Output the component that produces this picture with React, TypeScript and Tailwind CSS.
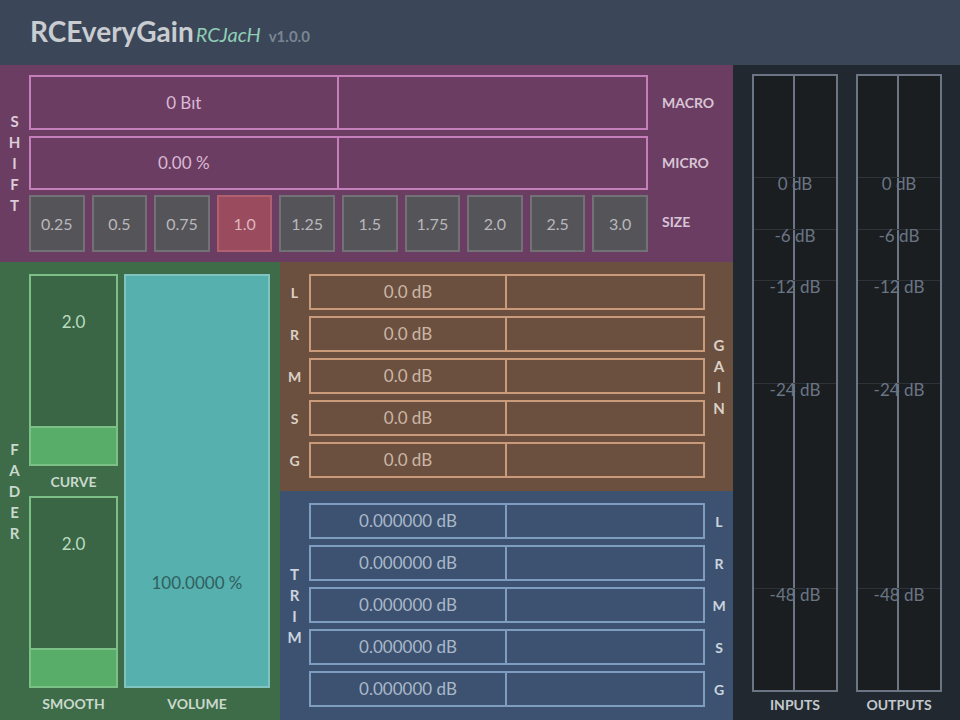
const font = "font-['Lato','Open_Sans',sans-serif]";

function Letters({ text, className }: { text: string; className: string }) {
    return (
        <div className={`flex flex-col items-center text-[15px] font-bold ${className}`}>
            {text.split("").map((c, i) => (
                <span key={i} className="h-[21px] leading-[21px]">{c}</span>
            ))}
        </div>
    );
}

function HalfBar({ value, border, text, h }: { value: string; border: string; text: string; h: string }) {
    return (
        <div className={`flex border-2 ${border} ${h}`}>
            <div className={`w-1/2 border-r-2 ${border} flex items-center justify-center text-[17px] ${text}`}>{value}</div>
            <div className="w-1/2" />
        </div>
    );
}

const sizes = ["0.25", "0.5", "0.75", "1.0", "1.25", "1.5", "1.75", "2.0", "2.5", "3.0"];
const channels = ["L", "R", "M", "S", "G"];
const marks = [
    { label: "0 dB", top: 103 },
    { label: "-6 dB", top: 155 },
    { label: "-12 dB", top: 206 },
    { label: "-24 dB", top: 309 },
    { label: "-48 dB", top: 514 },
];

function Meter({ label }: { label: string }) {
    return (
        <div className="flex flex-col items-center w-[86px]">
            <div className="relative w-full h-[618px] border-2 border-[#6b7583] bg-[#1b1e21] flex">
                <div className="w-1/2 border-r-2 border-[#6b7583]" />
                {marks.map((m) => (
                    <div key={m.label} className="absolute left-0 right-0" style={{ top: m.top - 2 }}>
                        <div className="h-px bg-[#2e3339]" />
                        <div className="text-center text-[17px] leading-[12px] text-[#6a7584] whitespace-nowrap">{m.label}</div>
                    </div>
                ))}
            </div>
            <div className="h-[24px] flex items-center text-[14px] font-bold text-[#c3c8cd]">{label}</div>
        </div>
    );
}

function FaderBox({ value, label }: { value: string; label: string }) {
    return (
        <>
            <div className="h-[192px] border-2 border-[#7cc088] bg-[#3a6645] flex flex-col">
                <div className="flex-1 flex justify-center pt-[33px] text-[17px] text-[#b9dcc0]">{value}</div>
                <div className="h-[38px] bg-[#58ae69] border-t-2 border-[#7cc088]" />
            </div>
            <div className="h-[30px] flex items-center justify-center text-[14px] font-bold text-[#c9d9cc]">{label}</div>
        </>
    );
}

export default function App() {
    return (
        <div className={`w-[960px] h-[720px] overflow-hidden bg-[#3b4758] ${font}`}>
            <div className="h-[65px] flex items-end pb-[20px] pl-[30px] gap-[2px]">
                <span className="text-[28px] font-bold text-[#c9cdd2] leading-none">RCEveryGain</span>
                <span className="text-[20px] italic text-[#8fcdb5] leading-none mb-[1px]">RCJacH</span>
                <span className="text-[15px] font-bold text-[#7a8593] leading-none ml-[6px] mb-[1px]">v1.0.0</span>
            </div>
            <div className="flex h-[655px]">
                <div className="w-[733px] flex flex-col">
                    {/* shift */}
                    <div className="h-[197px] bg-[#6b3d62] flex pt-[10px]">
                        <div className="w-[29px] flex items-center justify-center pb-[10px]">
                            <Letters text="SHIFT" className="text-[#dccbd9]" />
                        </div>
                        <div className="w-[619px] flex flex-col">
                            <HalfBar value="0 Bıt" border="border-[#c47fbb]" text="text-[#dbb8d5]" h="h-[55px]" />
                            <div className="h-[6px]" />
                            <HalfBar value="0.00 %" border="border-[#c47fbb]" text="text-[#dbb8d5]" h="h-[54px]" />
                            <div className="h-[5px]" />
                            <div className="flex gap-[7px] h-[57px]">
                                {sizes.map((s) => (
                                    <div
                                        key={s}
                                        className={`flex-1 border-2 flex items-center justify-center text-[16px] ${
                                            s === "1.0"
                                                ? "bg-[#9a4b5d] border-[#b0606f] text-[#dcb8bf]"
                                                : "bg-[#555459] border-[#727175] text-[#b9b8bb]"
                                        }`}
                                    >
                                        {s}
                                    </div>
                                ))}
                            </div>
                        </div>
                        <div className="flex-1 flex flex-col pl-[14px] text-[14px] font-bold text-[#d8c4d5]">
                            <div className="h-[54px] flex items-center">MACRO</div>
                            <div className="h-[6px]" />
                            <div className="h-[54px] flex items-center">MICRO</div>
                            <div className="h-[4px]" />
                            <div className="h-[57px] flex items-center">SIZE</div>
                        </div>
                    </div>
                    <div className="flex flex-1">
                        {/* fader */}
                        <div className="w-[280px] bg-[#3e6b48] flex pt-[12px]">
                            <div className="w-[29px] flex items-center justify-center pb-[12px]">
                                <Letters text="FADER" className="text-[#c9d9cc]" />
                            </div>
                            <div className="w-[89px] flex flex-col">
                                <FaderBox value="2.0" label="CURVE" />
                                <FaderBox value="2.0" label="SMOOTH" />
                            </div>
                            <div className="w-[146px] ml-[6px] flex flex-col">
                                <div className="h-[414px] border-2 border-[#7fc4bf] bg-[#56b0ae] flex items-center justify-center pt-[204px] text-[17px] text-[#2f5f60]">
                                    100.0000 %
                                </div>
                                <div className="h-[30px] flex items-center justify-center text-[14px] font-bold text-[#c9d9cc]">VOLUME</div>
                            </div>
                        </div>
                        <div className="flex-1 flex flex-col">
                            {/* gain */}
                            <div className="h-[229px] bg-[#6b5040] flex pt-[12px]">
                                <div className="w-[29px] flex flex-col text-[14px] font-bold text-[#dcd0c6]">
                                    {channels.map((c, i) => (
                                        <div key={c} className={`h-[36px] flex items-center justify-center ${i ? "mt-[6px]" : ""}`}>{c}</div>
                                    ))}
                                </div>
                                <div className="w-[396px] flex flex-col gap-[6px]">
                                    {channels.map((c) => (
                                        <HalfBar key={c} value="0.0 dB" border="border-[#c99b7b]" text="text-[#cbb6a6]" h="h-[36px]" />
                                    ))}
                                </div>
                                <div className="flex-1 flex items-center justify-center pb-[12px]">
                                    <Letters text="GAIN" className="text-[#dcd0c6]" />
                                </div>
                            </div>
                            {/* trim */}
                            <div className="flex-1 bg-[#3d5270] flex pt-[12px]">
                                <div className="w-[29px] flex items-center justify-center pb-[12px]">
                                    <Letters text="TRIM" className="text-[#cbd4df]" />
                                </div>
                                <div className="w-[396px] flex flex-col gap-[6px]">
                                    {channels.map((c) => (
                                        <HalfBar key={c} value="0.000000 dB" border="border-[#7f9dc1]" text="text-[#a9b8ca]" h="h-[36px]" />
                                    ))}
                                </div>
                                <div className="flex-1 flex flex-col text-[14px] font-bold text-[#cbd4df]">
                                    {channels.map((c, i) => (
                                        <div key={c} className={`h-[36px] flex items-center justify-center ${i ? "mt-[6px]" : ""}`}>{c}</div>
                                    ))}
                                </div>
                            </div>
                        </div>
                    </div>
                </div>
                {/* meters */}
                <div className="flex-1 bg-[#222830] flex gap-[18px] pl-[19px] pt-[9px]">
                    <Meter label="INPUTS" />
                    <Meter label="OUTPUTS" />
                </div>
            </div>
        </div>
    );
}
